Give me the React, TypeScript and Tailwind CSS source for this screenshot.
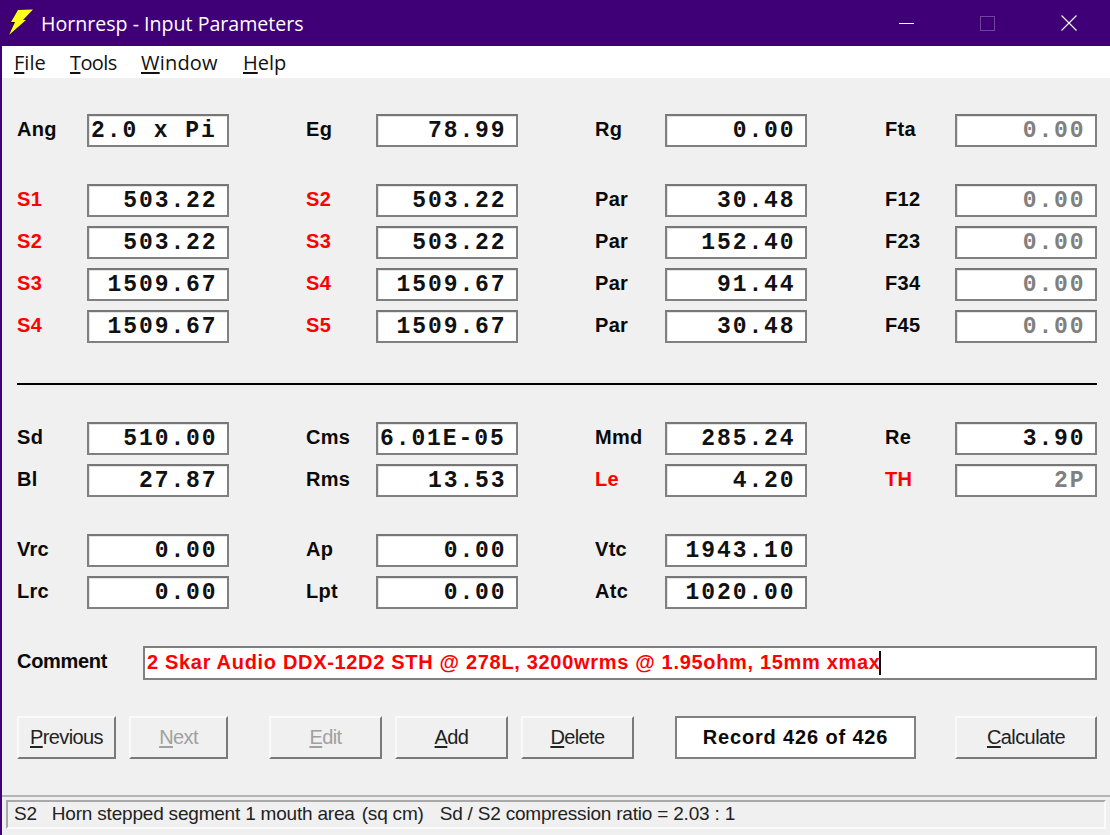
import React from "react";

type F = { l: string; v: string; red?: boolean; off?: boolean; left?: boolean };

const Cell = ({ l, v, red, off, left }: F) => (
  <div className="flex items-center h-[33px]">
    <div className={`w-[70px] pb-[4px] font-['Liberation_Sans'] font-bold text-[20px] tracking-[0.3px] leading-none ${red ? "text-[#ff0000]" : "text-[#0a0a0a]"}`}>{l}</div>
    <div className={`w-[142px] h-[33px] pt-[2px] bg-white border-2 border-[#808080] border-t-[#777] shadow-[inset_1px_1px_0_#e4e4e4] flex items-center ${left ? "justify-start pl-[2px]" : "justify-end pr-[9.5px]"} font-['Liberation_Mono'] font-bold text-[23px] tracking-[1.9px] whitespace-pre leading-none ${off ? "text-[#808080]" : "text-[#111]"}`}>{v}</div>
  </div>
);

const Row = ({ cells, className = "" }: { cells: (F | null)[]; className?: string }) => (
  <div className={`grid grid-cols-[212px_212px_213px_212px] gap-x-[77px] ${className}`}>
    {cells.map((c, i) => (c ? <Cell key={i} {...c} /> : <div key={i} />))}
  </div>
);

const Btn = ({ k, rest, off, w }: { k: string; rest: string; off?: boolean; w: string }) => (
  <div className={`${w} h-[43px] pb-[2px] flex items-center justify-center bg-[#f0f0f0] border-2 border-t-[#fafafa] border-l-[#fafafa] border-r-[#7a7a7a] border-b-[#7a7a7a] font-['Liberation_Sans'] text-[20px] tracking-[-0.6px] ${off ? "text-[#a0a0a0]" : "text-[#222]"}`}>
    <span><span className="underline underline-offset-2">{k}</span>{rest}</span>
  </div>
);

const Menu = ({ k, rest, w, t }: { k: string; rest: string; w: string; t?: string }) => (
  <span className={`${w} ${t ?? ""} font-['Open_Sans'] text-[20px] text-[#111]`}>
    <span className="underline underline-offset-2">{k}</span>{rest}
  </span>
);

export default function App() {
  return (
    <div className="w-[1110px] h-[835px] overflow-hidden flex flex-col bg-[#f0f0f0] border-l-2 border-[#3f0077]">
      <div className="h-[46px] shrink-0 bg-[#3f0077] flex items-center text-white -ml-[2px]">
        <svg viewBox="0 0 26 28" className="w-[26px] h-[28px] ml-[8px] mr-[7px]">
          <polygon points="10,1 25,0.5 15,11 18,11 1,26 7,13 3,13" fill="#000" transform="translate(-0.8,1)" />
          <polygon points="10,1 25,0.5 15,11 18,11 1,26 7,13 3,13" fill="#ffff1a" />
        </svg>
        <span className="font-['Open_Sans'] text-[19.6px] leading-none pt-[2px]">Hornresp - Input Parameters</span>
        <div className="ml-auto flex items-center">
          <div className="w-[15px] h-[1px] bg-white mr-[66px]" />
          <div className="w-[15px] h-[15px] border border-[#6f45a0] mr-[66px]" />
          <svg viewBox="0 0 16 16" className="w-[16px] h-[16px] mr-[33px]">
            <path d="M0.5 0.5L15.5 15.5M15.5 0.5L0.5 15.5" stroke="#fff" strokeWidth="1.1" />
          </svg>
        </div>
      </div>

      <div className="h-[32px] shrink-0 bg-white flex items-center pl-[14px] pt-[2px] -ml-[2px]">
        <Menu k="F" rest="ile" w="w-[56px]" />
        <Menu k="T" rest="ools" w="w-[71px]" t="tracking-[-0.6px]" />
        <Menu k="W" rest="indow" w="w-[102px]" t="tracking-[0.2px]" />
        <Menu k="H" rest="elp" w="w-[50px]" />
      </div>

      <div className="flex-1 pl-[15px] pt-[36px] flex flex-col">
        <Row cells={[
          { l: "Ang", v: "2.0 x Pi", left: true },
          { l: "Eg", v: "78.99" },
          { l: "Rg", v: "0.00" },
          { l: "Fta", v: "0.00", off: true },
        ]} />

        <div className="mt-[37px] flex flex-col gap-y-[9px]">
          <Row cells={[
            { l: "S1", v: "503.22", red: true },
            { l: "S2", v: "503.22", red: true },
            { l: "Par", v: "30.48" },
            { l: "F12", v: "0.00", off: true },
          ]} />
          <Row cells={[
            { l: "S2", v: "503.22", red: true },
            { l: "S3", v: "503.22", red: true },
            { l: "Par", v: "152.40" },
            { l: "F23", v: "0.00", off: true },
          ]} />
          <Row cells={[
            { l: "S3", v: "1509.67", red: true },
            { l: "S4", v: "1509.67", red: true },
            { l: "Par", v: "91.44" },
            { l: "F34", v: "0.00", off: true },
          ]} />
          <Row cells={[
            { l: "S4", v: "1509.67", red: true },
            { l: "S5", v: "1509.67", red: true },
            { l: "Par", v: "30.48" },
            { l: "F45", v: "0.00", off: true },
          ]} />
        </div>

        <div className="mt-[40px] w-[1080px] h-[2px] bg-black" />

        <div className="mt-[37px] flex flex-col gap-y-[9px]">
          <Row cells={[
            { l: "Sd", v: "510.00" },
            { l: "Cms", v: "6.01E-05", left: true },
            { l: "Mmd", v: "285.24" },
            { l: "Re", v: "3.90" },
          ]} />
          <Row cells={[
            { l: "Bl", v: "27.87" },
            { l: "Rms", v: "13.53" },
            { l: "Le", v: "4.20", red: true },
            { l: "TH", v: "2P", red: true, off: true },
          ]} />
        </div>

        <div className="mt-[37px] flex flex-col gap-y-[9px]">
          <Row cells={[
            { l: "Vrc", v: "0.00" },
            { l: "Ap", v: "0.00" },
            { l: "Vtc", v: "1943.10" },
            null,
          ]} />
          <Row cells={[
            { l: "Lrc", v: "0.00" },
            { l: "Lpt", v: "0.00" },
            { l: "Atc", v: "1020.00" },
            null,
          ]} />
        </div>

        <div className="mt-[37px] flex items-center h-[34px]">
          <div className="w-[126px] pb-[4px] font-['Liberation_Sans'] font-bold text-[20px] tracking-[-0.3px] text-[#0a0a0a]">Comment</div>
          <div className="w-[954px] h-[34px] pb-[3px] bg-white border-2 border-[#808080] flex items-center pl-[2px] font-['Liberation_Sans'] font-bold text-[20px] tracking-[0.68px] text-[#ff0000] whitespace-pre">
            2 Skar Audio DDX-12D2 STH @ 278L, 3200wrms @ 1.95ohm, 15mm xmax
            <span className="w-[2px] h-[24px] mt-[3px] -ml-[2px] bg-[#111]" />
          </div>
        </div>

        <div className="mt-[36px] flex items-center">
          <Btn k="P" rest="revious" w="w-[99px]" />
          <div className="w-[13px]" />
          <Btn k="N" rest="ext" off w="w-[99px]" />
          <div className="w-[41px]" />
          <Btn k="E" rest="dit" off w="w-[113px]" />
          <div className="w-[13px]" />
          <Btn k="A" rest="dd" w="w-[113px]" />
          <div className="w-[13px]" />
          <Btn k="D" rest="elete" w="w-[113px]" />
          <div className="w-[41px]" />
          <div className="w-[241px] h-[43px] pb-[2px] bg-white border-2 border-[#808080] flex items-center justify-center font-['Liberation_Sans'] font-bold text-[20px] tracking-[0.85px] text-[#0a0a0a]">
            Record 426 of 426
          </div>
          <div className="w-[39px]" />
          <Btn k="C" rest="alculate" w="w-[142px]" />
        </div>
      </div>

      <div className="h-[40px] shrink-0 border-t-2 border-[#b4b4b4] pt-[3px] pl-[4px] pr-[4px] pb-[6px]">
        <div className="h-[29px] border-2 border-t-[#a8a8a8] border-l-[#a8a8a8] border-r-[#fafafa] border-b-[#fafafa] flex items-center pl-[6px] font-['Liberation_Sans'] text-[19px] tracking-[-0.2px] text-[#222] whitespace-pre">
          <span>S2</span>
          <span className="ml-[15px]">Horn stepped segment 1 mouth area</span>
          <span className="ml-[7px]">(sq cm)</span>
          <span className="ml-[16px]">Sd / S2 compression ratio = 2.03 : 1</span>
        </div>
      </div>
    </div>
  );
}
